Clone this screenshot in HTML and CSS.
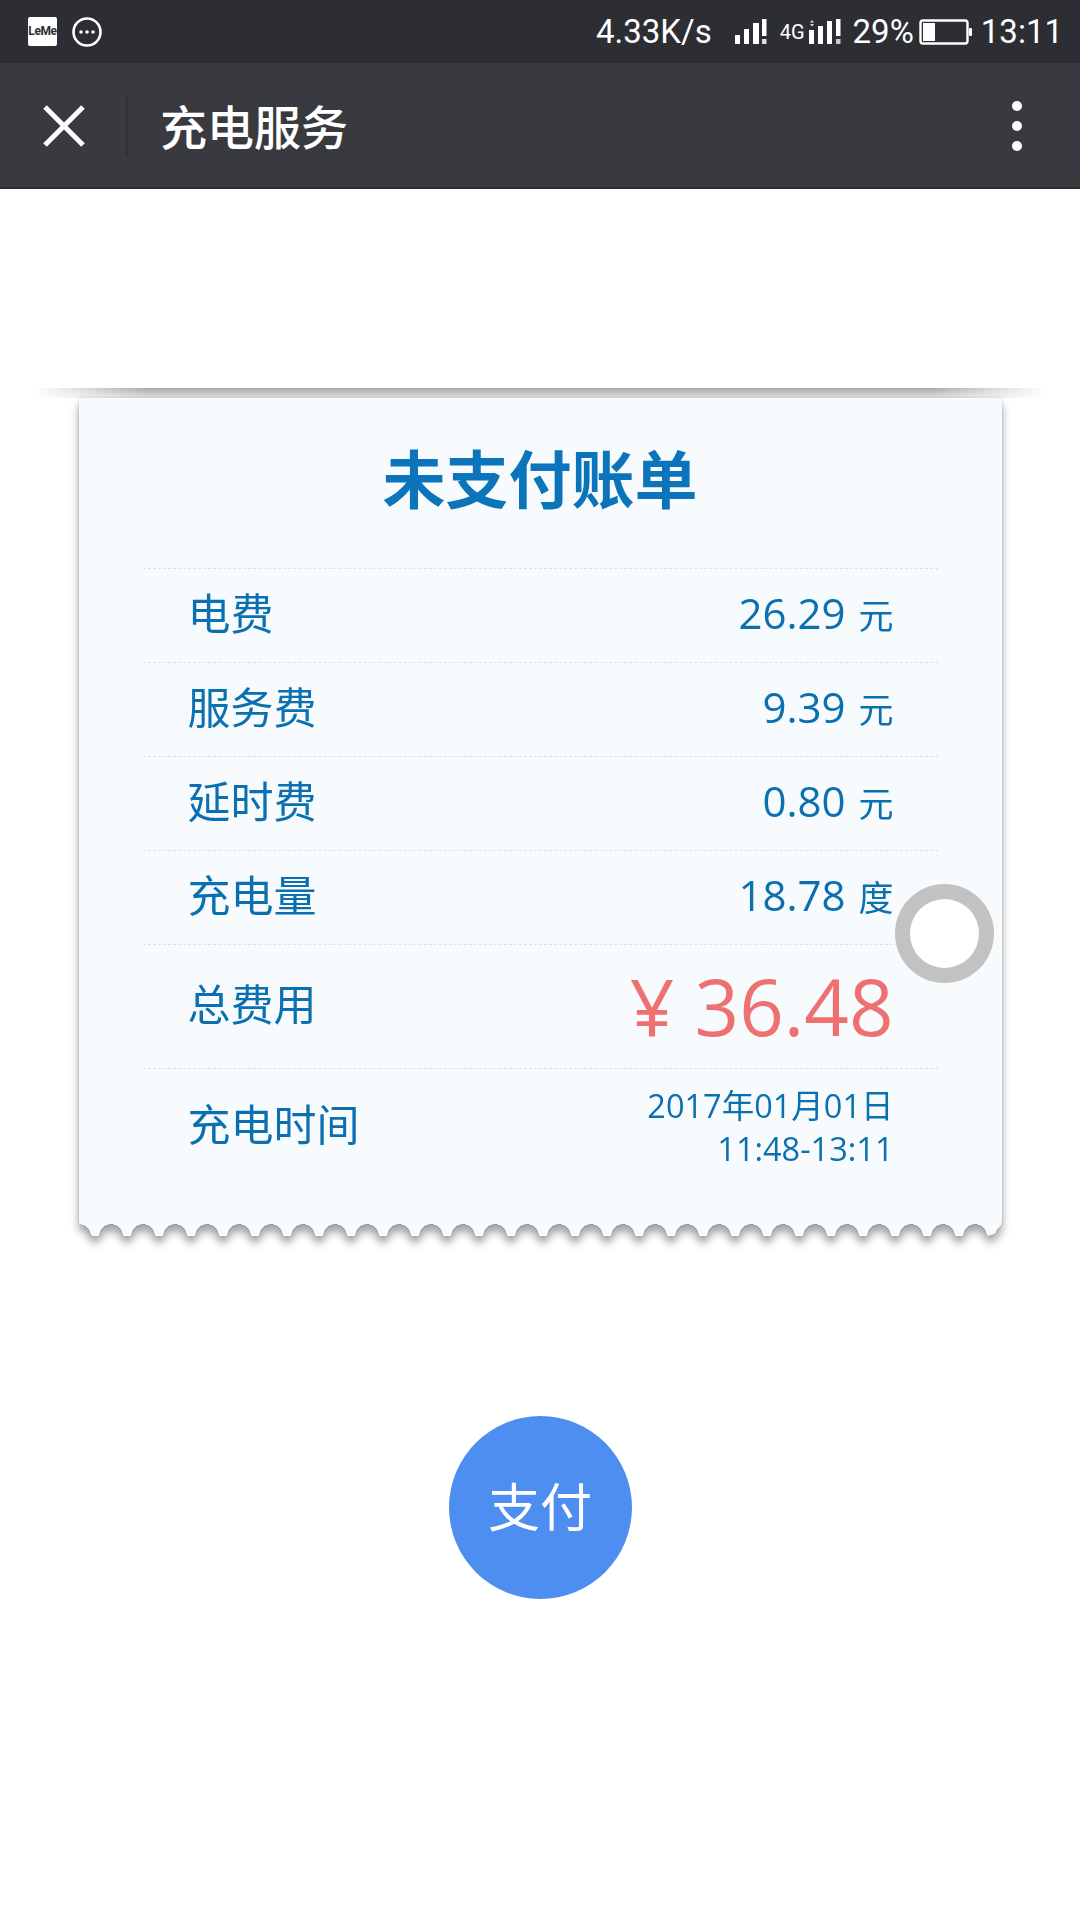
FILE: index.html
```html
<!DOCTYPE html>
<html lang="zh-CN">
<head>
    <meta charset="UTF-8">
    <meta name="viewport" content="width=device-width, initial-scale=1.0">
    <title>充电服务</title>
    <link rel="stylesheet" href="styles.css">
</head>
<body>

<div class="status-bar">
    <div class="status-left">
        <div class="leme-icon">LeMe</div>
        <svg class="more-icon" width="30" height="30" viewBox="0 0 30 30">
            <circle cx="15" cy="15" r="13.5" fill="none" stroke="#fff" stroke-width="2.6"/>
            <circle cx="9" cy="15" r="1.8" fill="#fff"/>
            <circle cx="15" cy="15" r="1.8" fill="#fff"/>
            <circle cx="21" cy="15" r="1.8" fill="#fff"/>
        </svg>
    </div>
    <div class="status-right">
        <span class="speed">4.33K/s</span>
        <svg class="signal-one" width="32" height="26" viewBox="0 0 32 26">
            <rect x="0" y="16" width="5" height="9" fill="#fff"/>
            <rect x="9" y="10" width="5" height="15" fill="#fff"/>
            <rect x="18" y="4" width="6" height="21" fill="#fff"/>
            <rect x="27" y="0" width="4.5" height="17" fill="#fff"/>
            <rect x="27" y="20" width="4.5" height="5" fill="#ddd"/>
        </svg>
        <span class="net">4G</span>
        <svg class="signal-two" width="32" height="26" viewBox="0 0 32 26">
            <path d="M3 1l2 2.4H1zM3 7.5l2-2.4H1z" fill="#ddd"/>
            <rect x="0" y="11" width="5" height="14" fill="#fff"/>
            <rect x="9" y="7" width="5" height="18" fill="#fff"/>
            <rect x="18" y="2" width="5" height="23" fill="#fff"/>
            <rect x="27" y="0" width="4.5" height="17" fill="#fff"/>
            <rect x="27" y="20" width="4.5" height="5" fill="#ccc"/>
        </svg>
        <span class="battery-text">29%</span>
        <svg class="battery" width="54" height="26" viewBox="0 0 54 26">
            <rect x="1.5" y="1.5" width="47" height="23" rx="2.5" fill="none" stroke="#fff" stroke-width="2.4"/>
            <rect x="4" y="4" width="12" height="18" fill="#fff"/>
            <rect x="50" y="9" width="3" height="8" rx="1" fill="#fff"/>
        </svg>
        <span class="clock">13:11</span>
    </div>
</div>

<div class="nav-bar">
    <svg class="close-icon" width="42" height="42" viewBox="0 0 42 42">
        <path d="M2 2L40 40M40 2L2 40" stroke="#fff" stroke-width="5" fill="none"/>
    </svg>
    <div class="nav-divider"></div>
    <div class="nav-title">充电服务</div>
    <div class="nav-dots">
        <span></span>
        <span></span>
        <span></span>
    </div>
</div>

<div class="page">
    <div class="printer-slot"></div>

    <div class="receipt-shadow">
        <div class="receipt">
            <h1 class="receipt-title">未支付账单</h1>
            <div class="row">
                <span class="row-label">电费</span>
                <span class="row-value">26.29 <small>元</small></span>
            </div>
            <div class="row">
                <span class="row-label">服务费</span>
                <span class="row-value">9.39 <small>元</small></span>
            </div>
            <div class="row">
                <span class="row-label">延时费</span>
                <span class="row-value">0.80 <small>元</small></span>
            </div>
            <div class="row">
                <span class="row-label">充电量</span>
                <span class="row-value">18.78 <small>度</small></span>
            </div>
            <div class="row row-total">
                <span class="row-label">总费用</span>
                <span class="total-value">¥ 36.48</span>
            </div>
            <div class="row row-time">
                <span class="row-label">充电时间</span>
                <span class="time-value">2017年01月01日<br>11:48-13:11</span>
            </div>
        </div>
    </div>

    <button class="pay-button">支付</button>
</div>

<!-- floating assistive touch ball -->
<div class="float-ball"></div>

</body>
</html>
```

FILE: styles.css
```css
* {
    box-sizing: border-box;
}

body {
    margin: 0;
    padding: 0;
    width: 1080px;
    height: 1920px;
    background: #fff;
    overflow: hidden;
    position: relative;
    font-family: "Open Sans", "Noto Sans CJK SC", sans-serif;
}

/* Status bar */
.status-bar {
    height: 63px;
    background: #2d2e33;
    color: #fff;
    display: flex;
    align-items: center;
    justify-content: space-between;
    padding: 0 17px 0 28px;
    font-family: Roboto, sans-serif;
    font-size: 33px;
}

.status-left {
    display: flex;
    align-items: center;
    gap: 15px;
}

.leme-icon {
    width: 29px;
    height: 29px;
    background: #fff;
    border-radius: 2px;
    color: #2d2e33;
    font-size: 12px;
    font-weight: 700;
    line-height: 29px;
    text-align: center;
    letter-spacing: -0.4px;
}

.more-icon {
    display: block;
}

.status-right {
    display: flex;
    align-items: center;
}

.speed {
    font-size: 33px;
    margin-right: 23px;
}

.signal-one {
    margin-right: 13px;
}

.net {
    font-size: 20px;
    margin-right: 4px;
}

.signal-two {
    margin-right: 12px;
}

.battery {
    margin: 0 8px 0 5px;
}

/* Nav bar */
.nav-bar {
    height: 126px;
    background: #393a3f;
    border-bottom: 2px solid #2b2c30;
    display: flex;
    align-items: center;
    padding: 2px 58px 0 43px;
    color: #fff;
}

.close-icon {
    flex: none;
}

.nav-divider {
    width: 2px;
    height: 62px;
    background: #303136;
    margin: 0 32px 0 41px;
}

.nav-title {
    flex: 1;
    margin-bottom: 4px;
    font-family: "Noto Sans CJK SC", sans-serif;
    font-size: 47px;
    font-weight: 500;
}

.nav-dots {
    display: flex;
    flex-direction: column;
    gap: 10px;
}

.nav-dots span {
    width: 10px;
    height: 10px;
    border-radius: 50%;
    background: #fff;
}

/* Receipt */
.page {
    display: flex;
    flex-direction: column;
    align-items: center;
    padding-top: 199px;
}

.printer-slot {
    width: 1008px;
    height: 10px;
    background: linear-gradient(to bottom, #a9a9a9, #e0e0e0);
    -webkit-mask: linear-gradient(to right, transparent, #000 11%, #000 89%, transparent);
    mask: linear-gradient(to right, transparent, #000 11%, #000 89%, transparent);
}

.receipt-shadow {
    filter: drop-shadow(0 0 1px rgba(0, 0, 0, 0.18)) drop-shadow(0 7px 4px rgba(0, 0, 0, 0.36));
}

.receipt {
    width: 923px;
    height: 838px;
    padding: 0 64px;
    background: #f8fbfd;
    border-radius: 0 0 15px 15px;
    color: #0b70b0;
    -webkit-mask:
        radial-gradient(circle 12px at 16px 100%, transparent 97%, #000) -16px 100% / 32px 20px repeat-x,
        linear-gradient(#000, #000) top / 100% calc(100% - 20px) no-repeat;
    mask:
        radial-gradient(circle 12px at 16px 100%, transparent 97%, #000) -16px 100% / 32px 20px repeat-x,
        linear-gradient(#000, #000) top / 100% calc(100% - 20px) no-repeat;
}

.receipt-title {
    margin: 0;
    height: 170px;
    padding-bottom: 16px;
    display: flex;
    align-items: center;
    justify-content: center;
    color: #0c74bb;
    font-family: "Noto Sans CJK SC", sans-serif;
    font-size: 63px;
    font-weight: 700;
}

.row {
    height: 94px;
    border-top: 1px dashed #d9e2e6;
    display: flex;
    align-items: center;
    justify-content: space-between;
    padding: 0 44px 0 45px;
}

.row-label {
    font-size: 43px;
    font-family: "Noto Sans CJK SC", sans-serif;
    margin-bottom: 10px;
}

.row-value {
    font-size: 42px;
    margin-bottom: 6px;
}

.row-value small {
    font-size: 35px;
    margin-left: 2px;
    font-family: "Noto Sans CJK SC", sans-serif;
}

.row-total {
    height: 124px;
}

.total-value {
    font-size: 78px;
    color: #ef7070;
    margin-bottom: 2px;
}

.row-time {
    height: 116px;
}

.time-value {
    font-size: 32.5px;
    line-height: 43px;
    text-align: right;
}

/* Pay button */
.pay-button {
    width: 183px;
    height: 183px;
    margin-top: 180px;
    padding: 0 0 6px;
    border: none;
    border-radius: 50%;
    background: #4d8ef0;
    color: #fff;
    font-family: "Noto Sans CJK SC", sans-serif;
    font-size: 52px;
}

.float-ball {
    position: absolute;
    left: 895px;
    top: 884px;
    width: 99px;
    height: 99px;
    border-radius: 50%;
    border: 15px solid rgba(191, 191, 191, 0.95);
    background: #fff;
}
```
